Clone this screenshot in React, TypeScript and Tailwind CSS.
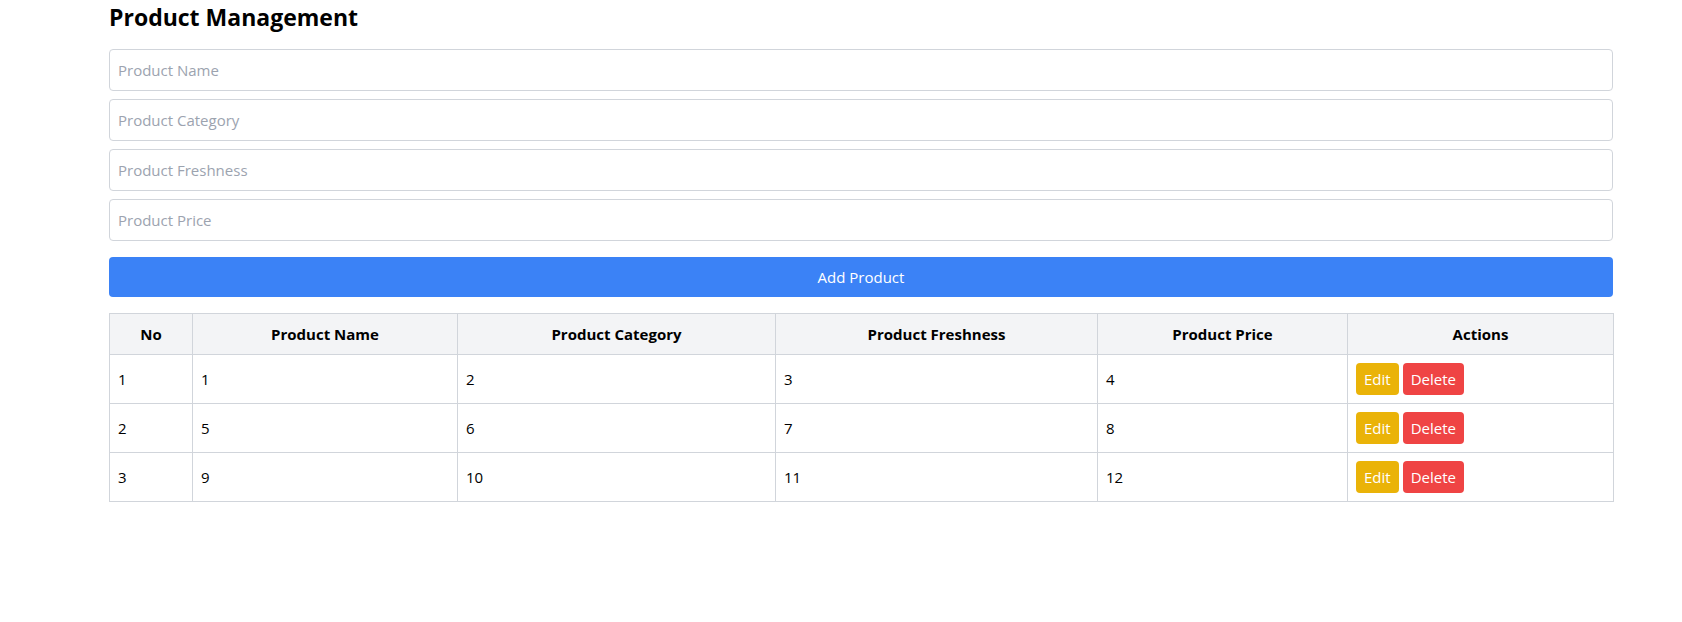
import { useState } from "react";

type Product = {
  id: number;
  name: string;
  category: string;
  freshness: string;
  price: string;
};

const initialProducts: Product[] = [
  { id: 1, name: "1", category: "2", freshness: "3", price: "4" },
  { id: 2, name: "5", category: "6", freshness: "7", price: "8" },
  { id: 3, name: "9", category: "10", freshness: "11", price: "12" },
];

export default function App() {
  const [products, setProducts] = useState<Product[]>(initialProducts);
  const [form, setForm] = useState({ name: "", category: "", freshness: "", price: "" });

  const addProduct = () => {
    setProducts([...products, { id: Date.now(), ...form }]);
    setForm({ name: "", category: "", freshness: "", price: "" });
  };

  const inputClass =
    "w-full h-[42px] px-2 border border-[#d1d5db] rounded text-[15px] text-black placeholder:text-[#9ca3af] outline-none";

  return (
    <div className="min-h-[622px] bg-white font-['Open_Sans',sans-serif] text-black text-[15px]">
      <div className="ml-[109px] w-[1504px]">
        <h1 className="text-[23px] font-bold leading-8 pt-[1px] mb-4">Product Management</h1>

        <input
          className={`${inputClass} mb-2`}
          placeholder="Product Name"
          value={form.name}
          onChange={(e) => setForm({ ...form, name: e.target.value })}
        />
        <input
          className={`${inputClass} mb-2`}
          placeholder="Product Category"
          value={form.category}
          onChange={(e) => setForm({ ...form, category: e.target.value })}
        />
        <input
          className={`${inputClass} mb-2`}
          placeholder="Product Freshness"
          value={form.freshness}
          onChange={(e) => setForm({ ...form, freshness: e.target.value })}
        />
        <input
          className={`${inputClass} mb-4`}
          placeholder="Product Price"
          value={form.price}
          onChange={(e) => setForm({ ...form, price: e.target.value })}
        />

        <button
          className="w-full h-10 bg-[#3b82f6] text-white text-[15px] rounded"
          onClick={addProduct}
        >
          Add Product
        </button>

        <table className="w-full mt-4 table-fixed border-collapse border border-[#d1d5db] text-[15px]">
          <colgroup>
            <col className="w-[83px]" />
            <col className="w-[265px]" />
            <col className="w-[318px]" />
            <col className="w-[322px]" />
            <col className="w-[250px]" />
            <col className="w-[266px]" />
          </colgroup>
          <thead>
            <tr className="bg-[#f3f4f6] h-[41px]">
              <th className="border border-[#d1d5db] px-2 font-bold">No</th>
              <th className="border border-[#d1d5db] px-2 font-bold">Product Name</th>
              <th className="border border-[#d1d5db] px-2 font-bold">Product Category</th>
              <th className="border border-[#d1d5db] px-2 font-bold">Product Freshness</th>
              <th className="border border-[#d1d5db] px-2 font-bold">Product Price</th>
              <th className="border border-[#d1d5db] px-2 font-bold">Actions</th>
            </tr>
          </thead>
          <tbody>
            {products.map((p, i) => (
              <tr key={p.id} className="h-[49px]">
                <td className="border border-[#d1d5db] px-2">{i + 1}</td>
                <td className="border border-[#d1d5db] px-2">{p.name}</td>
                <td className="border border-[#d1d5db] px-2">{p.category}</td>
                <td className="border border-[#d1d5db] px-2">{p.freshness}</td>
                <td className="border border-[#d1d5db] px-2">{p.price}</td>
                <td className="border border-[#d1d5db] px-2">
                  <div className="flex gap-1">
                    <button className="h-8 px-2 bg-[#eab308] text-white rounded">Edit</button>
                    <button
                      className="h-8 px-2 bg-[#ef4444] text-white rounded"
                      onClick={() => setProducts(products.filter((x) => x.id !== p.id))}
                    >
                      Delete
                    </button>
                  </div>
                </td>
              </tr>
            ))}
          </tbody>
        </table>
      </div>
    </div>
  );
}
